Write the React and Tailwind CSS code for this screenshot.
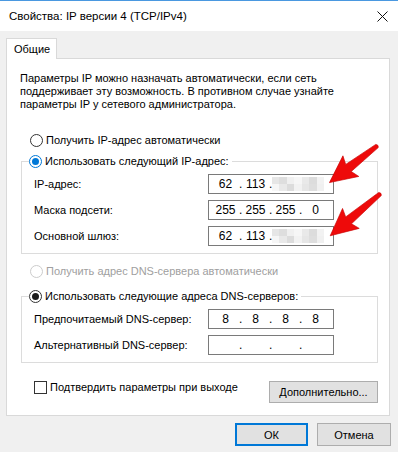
import React from 'react'

const font = { fontFamily: '"Liberation Sans", Arial, sans-serif' }

function Radio({ checked, tone = 'dark', disabled, children }) {
  const ring = disabled
    ? 'border-[#cccccc]'
    : tone === 'blue'
      ? 'border-[#0078d7]'
      : 'border-[#333333]'
  const dot = tone === 'blue' ? 'bg-[#0078d7]' : 'bg-[#1a1a1a]'
  return (
    <div className={`flex items-center h-[14px] ${disabled ? 'text-[#a0a0a0]' : 'text-black'}`}>
      <span className={`w-[13px] h-[13px] rounded-full border bg-white flex items-center justify-center ${ring}`}>
        {checked && <span className={`w-[7px] h-[7px] rounded-full ${dot}`} />}
      </span>
      <span className="ml-[3px]">{children}</span>
    </div>
  )
}

function Blur() {
  const cells = ['#e6e6e6', '#dedede', '#f0f0f0', '#f6f6f6', '#e9e9e9', '#dcdcdc', '#f2f2f2']
  return (
    <div className="absolute left-[63px] top-[2px] bottom-[2px] w-[52px] flex">
      {cells.map((c, i) => (
        <div key={i} className="flex-1 flex flex-col">
          <div className="flex-1" style={{ background: c }} />
          <div className="flex-1" style={{ background: cells[(i + 3) % cells.length] }} />
        </div>
      ))}
    </div>
  )
}

function IpBox({ parts, blur }) {
  return (
    <div className="relative w-[126px] h-[20px] border border-[#7a7a7a] bg-white flex items-center pl-[3px] text-[12px]">
      {parts.map((p, i) => (
        <React.Fragment key={i}>
          <span className="w-[27px] text-center">{p}</span>
          {i < 3 && <span className="w-[3px] text-center">.</span>}
        </React.Fragment>
      ))}
      {blur && <Blur />}
    </div>
  )
}

function Row({ label, children }) {
  return (
    <div className="flex items-center justify-between h-[20px] pl-[12px] pr-[43px]">
      <span>{label}</span>
      {children}
    </div>
  )
}

function Arrow({ x, y, angle, len }) {
  const L = len
  return (
    <g transform={`translate(${x} ${y}) rotate(${angle})`}>
      <path
        d={`M0 -2 L${L - 24} -4.5 L${L - 27} -13 L${L} 0 L${L - 27} 13 L${L - 24} 4.5 L0 2 Q-2.2 0 0 -2 Z`}
        fill="#ee0a0a"
        stroke="#c80000"
        strokeWidth="0.6"
        strokeLinejoin="round"
      />
    </g>
  )
}

export default function App() {
  return (
    <div className="relative w-[398px] h-[452px] bg-[#f0f0f0] overflow-hidden text-[11px] leading-[14px] text-black" style={font}>
      <div className="h-[31px] bg-white border-t border-[#4a98e0] flex items-center justify-between pl-[9px] pr-[10px] text-[11.5px]">
        <span>Свойства: IP версии 4 (TCP/IPv4)</span>
        <svg width="11" height="11" viewBox="0 0 11 11">
          <path d="M0.5 0.5 L10.5 10.5 M10.5 0.5 L0.5 10.5" stroke="#111" strokeWidth="1" />
        </svg>
      </div>

      <div className="pt-[7px] px-[6px]">
        <div className="relative z-10 -mb-px w-[51px] h-[21px] bg-white border border-b-0 border-[#d9d9d9] flex items-center pl-[7px]">
          Общие
        </div>
        <div className="w-[384px] h-[358px] bg-white border border-[#d9d9d9] pl-[14px] pt-[13px]">
          <p className="-ml-px leading-[13px]">
            Параметры IP можно назначать автоматически, если сеть<br />
            поддерживает эту возможность. В противном случае узнайте<br />
            параметры IP у сетевого администратора.
          </p>

          <div className="mt-[22px] pl-[9px]">
            <Radio>Получить IP-адрес автоматически</Radio>
          </div>

          <fieldset className="mt-[7px] w-[357px] border border-[#dcdcdc] pb-[7px]">
            <legend className="ml-[7px] pr-[3px]">
              <Radio checked tone="blue">Использовать следующий IP-адрес:</Radio>
            </legend>
            <div className="mt-[6px] flex flex-col gap-[6px]">
              <Row label="IP-адрес:">
                <IpBox parts={['62', '113', '', '']} blur />
              </Row>
              <Row label="Маска подсети:">
                <IpBox parts={['255', '255', '255', '0']} />
              </Row>
              <Row label="Основной шлюз:">
                <IpBox parts={['62', '113', '', '']} blur />
              </Row>
            </div>
          </fieldset>

          <div className="mt-[10px] pl-[9px]">
            <Radio disabled>Получить адрес DNS-сервера автоматически</Radio>
          </div>

          <fieldset className="mt-[11px] w-[357px] border border-[#dcdcdc] pb-[7px]">
            <legend className="ml-[7px] pr-[3px]">
              <Radio checked>Использовать следующие адреса DNS-серверов:</Radio>
            </legend>
            <div className="mt-[6px] flex flex-col gap-[6px]">
              <Row label="Предпочитаемый DNS-сервер:">
                <IpBox parts={['8', '8', '8', '8']} />
              </Row>
              <Row label="Альтернативный DNS-сервер:">
                <IpBox parts={['', '', '', '']} />
              </Row>
            </div>
          </fieldset>

          <div className="mt-[17px] w-[357px] flex items-start justify-between">
            <label className="flex items-center h-[14px] pl-[13px]">
              <span className="w-[13px] h-[13px] border border-[#333333] bg-white" />
              <span className="ml-[3px]">Подтвердить параметры при выходе</span>
            </label>
            <button className="mt-[1px] w-[109px] h-[22px] bg-[#e1e1e1] border border-[#adadad] flex items-center justify-center">
              Дополнительно...
            </button>
          </div>
        </div>

        <div className="flex justify-end gap-[9px] pt-[7px] pr-[1px]">
          <button className="w-[73px] h-[23px] bg-[#e1e1e1] border-2 border-[#0078d7] flex items-center justify-center">
            ОК
          </button>
          <button className="w-[74px] h-[23px] bg-[#e1e1e1] border border-[#adadad] flex items-center justify-center">
            Отмена
          </button>
        </div>
      </div>

      <svg className="absolute inset-0 pointer-events-none" width="398" height="452">
        <Arrow x={377} y={146} angle={142.4} len={60} />
        <Arrow x={380} y={194} angle={140} len={65} />
      </svg>
    </div>
  )
}
